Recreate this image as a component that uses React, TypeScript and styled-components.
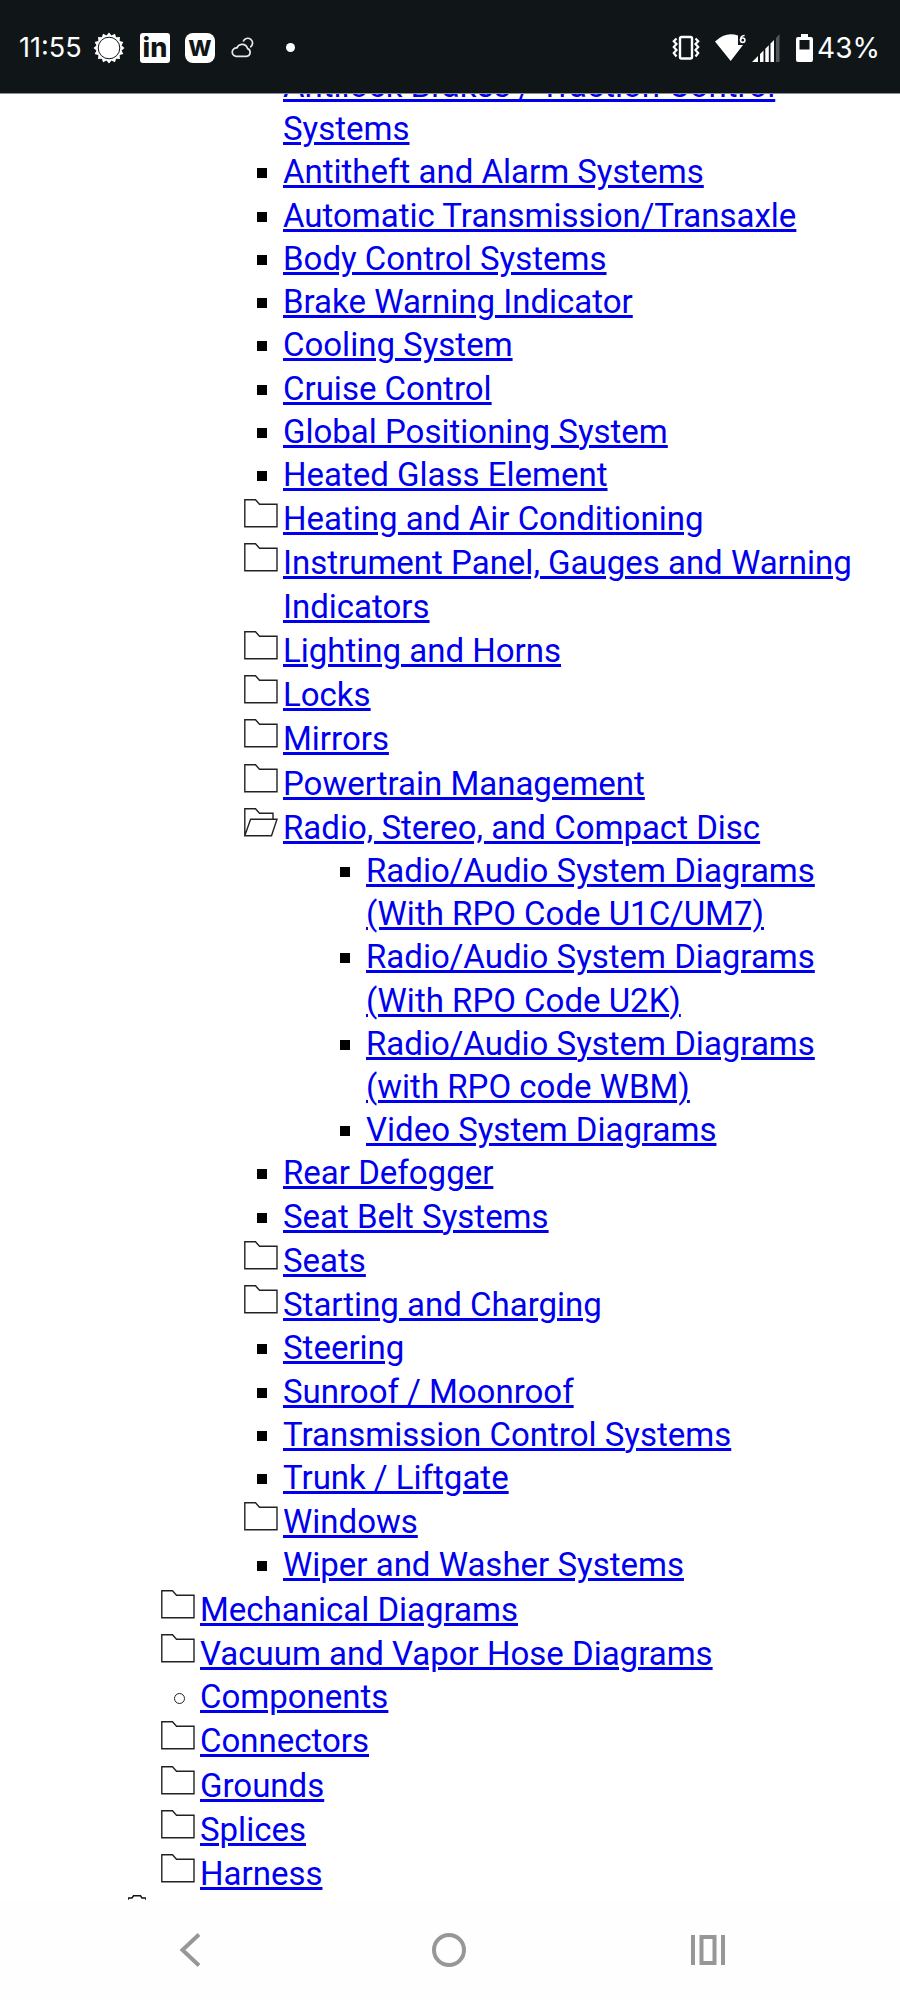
import React from "react";
import styled, { createGlobalStyle } from "styled-components";

const GlobalStyle = createGlobalStyle`
  *, *::before, *::after { box-sizing: border-box; }
  body {
    margin: 0;
    background: #ffffff;
    font-family: Roboto, "Liberation Sans", sans-serif;
  }
`;

const Screen = styled.div`
  display: flex;
  flex-direction: column;
  height: 100vh;
  overflow: hidden;
`;

const StatusBar = styled.header`
  display: flex;
  flex: none;
  align-items: center;
  justify-content: space-between;
  height: 94px;
  padding: 2px 20px 0 19px;
  border-bottom: 1px solid #8d9092;
  background: #101518;
  color: #ffffff;
  font-family: Inter, "Liberation Sans", sans-serif;
  font-size: 28px;
  line-height: 32px;
`;

const StatusGroup = styled.div<{ $gap: number }>`
  display: flex;
  align-items: center;
  gap: ${({ $gap }) => $gap}px;
`;

const Clock = styled.time`
  width: 59px;
  font-size: 27px;
  white-space: nowrap;
`;

const AppBadge = styled.span<{ $radius: number; $size: number }>`
  display: flex;
  align-items: center;
  justify-content: center;
  width: 30px;
  height: 30px;
  border-radius: ${({ $radius }) => $radius}px;
  background: #ffffff;
  color: #101518;
  font-size: ${({ $size }) => $size}px;
  font-weight: 800;
  line-height: 30px;
`;

const Dot = styled.span`
  width: 9px;
  height: 9px;
  margin-left: 16px;
  border-radius: 50%;
  background: #ffffff;
`;

const Battery = styled.span`
  display: flex;
  align-items: center;
  gap: 4px;
  margin-left: 11px;
`;

const Viewport = styled.main`
  flex: 1;
  min-height: 0;
  overflow: hidden;
`;

const Tree = styled.ul`
  margin: -30px 0 0;
  padding: 0 17px 0 77px;
  list-style: none;
  font-size: 33px;
  line-height: 1.31;
`;

const Branch = styled.ul`
  margin: 0;
  padding: 0 0 0 83px;
  list-style: none;
`;

const Row = styled.div<{ $folder: boolean }>`
  display: flex;
  align-items: flex-start;
  padding-top: ${({ $folder }) => ($folder ? 1 : 0)}px;
`;

const MarkerSlot = styled.span<{ $top: number; $left: number }>`
  display: flex;
  flex: none;
  width: 40px;
  padding: ${({ $top, $left }) => `${$top}px 0 0 ${$left}px`};
`;

const Square = styled.span`
  width: 10px;
  height: 10px;
  background: #000000;
`;

const Ring = styled.span`
  width: 11px;
  height: 11px;
  border: 1px solid #222222;
  border-radius: 50%;
`;

const TreeLink = styled.a`
  color: #0000ee;
  text-decoration: underline;
  text-decoration-thickness: 3px;
`;

const NextSection = styled.li`
  display: flex;
  padding-left: 51px;
`;

const NavBar = styled.nav`
  display: flex;
  flex: none;
  height: 100px;
  padding: 0 63px 0 61px;
  background: #fefefe;
`;

const NavButton = styled.button`
  display: flex;
  flex: 1;
  align-items: center;
  justify-content: center;
  padding: 0;
  border: 0;
  background: none;
  color: #979797;
`;

type Kind = "square" | "ring" | "folder" | "open";
type Node = { label: string; kind: Kind; children?: Node[] };

const square = (label: string): Node => ({ label, kind: "square" });
const folder = (label: string): Node => ({ label, kind: "folder" });

const systems: Node[] = [
  square("Antilock Brakes / Traction Control Systems"),
  square("Antitheft and Alarm Systems"),
  square("Automatic Transmission/Transaxle"),
  square("Body Control Systems"),
  square("Brake Warning Indicator"),
  square("Cooling System"),
  square("Cruise Control"),
  square("Global Positioning System"),
  square("Heated Glass Element"),
  folder("Heating and Air Conditioning"),
  folder("Instrument Panel, Gauges and Warning Indicators"),
  folder("Lighting and Horns"),
  folder("Locks"),
  folder("Mirrors"),
  folder("Powertrain Management"),
  {
    label: "Radio, Stereo, and Compact Disc",
    kind: "open",
    children: [
      square("Radio/Audio System Diagrams (With RPO Code U1C/UM7)"),
      square("Radio/Audio System Diagrams (With RPO Code U2K)"),
      square("Radio/Audio System Diagrams (with RPO code WBM)"),
      square("Video System Diagrams"),
    ],
  },
  square("Rear Defogger"),
  square("Seat Belt Systems"),
  folder("Seats"),
  folder("Starting and Charging"),
  square("Steering"),
  square("Sunroof / Moonroof"),
  square("Transmission Control Systems"),
  square("Trunk / Liftgate"),
  folder("Windows"),
  square("Wiper and Washer Systems"),
];

const diagrams: Node[] = [
  folder("Mechanical Diagrams"),
  folder("Vacuum and Vapor Hose Diagrams"),
  { label: "Components", kind: "ring" },
  folder("Connectors"),
  folder("Grounds"),
  folder("Splices"),
  folder("Harness"),
];

const FolderIcon = () => (
  <svg width="34" height="29" viewBox="0 0 34 29" fill="none" stroke="#222" strokeWidth="1.4" aria-hidden="true">
    <path d="M.8.8H11.5L15.5 5.2H33V27.8H.8Z" />
  </svg>
);

const OpenFolderIcon = () => (
  <svg width="34" height="29" viewBox="0 0 34 29" fill="none" stroke="#222" strokeWidth="1.4" aria-hidden="true">
    <path d="M.8 27.8V.8H11.5L15.5 5.2H29V11.2M.8 27.8 6.6 11.2H33L27.5 27.8Z" />
  </svg>
);

const CaseIcon = () => (
  <svg width="18" height="20" viewBox="0 0 18 20" fill="none" stroke="#111" strokeWidth="1.4" aria-hidden="true">
    <path d="M0 3H4L5.5.8H12.5L14 3H18V19H0Z" />
  </svg>
);

function Marker({ kind }: { kind: Kind }) {
  if (kind === "square") return <MarkerSlot $top={18} $left={14}><Square /></MarkerSlot>;
  if (kind === "ring") return <MarkerSlot $top={18} $left={14}><Ring /></MarkerSlot>;
  return (
    <MarkerSlot $top={2} $left={1}>
      {kind === "open" ? <OpenFolderIcon /> : <FolderIcon />}
    </MarkerSlot>
  );
}

function TreeNode({ node }: { node: Node }) {
  return (
    <li>
      <Row $folder={node.kind === "folder" || node.kind === "open"}>
        <Marker kind={node.kind} />
        <TreeLink href="#">{node.label}</TreeLink>
      </Row>
      {node.children && (
        <Branch>
          {node.children.map((child) => (
            <TreeNode key={child.label} node={child} />
          ))}
        </Branch>
      )}
    </li>
  );
}

const rays = Array.from({ length: 16 }, (_, i) => {
  const point = (r: number, turn: number) =>
    `${16 + r * Math.sin(turn * Math.PI * 2)},${16 - r * Math.cos(turn * Math.PI * 2)}`;
  return `${point(15.5, i / 16)} ${point(12.8, (i + 0.5) / 16)}`;
}).join(" ");

const SunIcon = () => (
  <svg width="32" height="32" viewBox="0 0 32 32" aria-hidden="true">
    <polygon points={rays} fill="#fff" />
    <circle cx="16" cy="16" r="10.8" fill="#fff" stroke="#101518" strokeWidth="1" />
  </svg>
);

const CloudIcon = () => (
  <svg width="24" height="22" viewBox="0 0 24 22" fill="none" stroke="#e8e8e8" strokeWidth="1.7" aria-hidden="true">
    <path d="M6 19.3H16.5A4 4 0 0 0 17.6 11.6C16.7 8.7 14.2 7.2 11.7 7.4 9.4 7.6 7.7 8.9 6.9 10.9A4.2 4.2 0 0 0 6 19.3Z" />
    <path d="M13.2 4.6A4.8 4.8 0 1 1 20.2 10.2" />
  </svg>
);

const VibrateIcon = () => (
  <svg width="28" height="26" viewBox="0 0 28 26" fill="none" stroke="#fff" aria-hidden="true">
    <rect x="8" y="2" width="12" height="21.5" rx="1.5" strokeWidth="2.4" />
    <path d="M4.5 3.5 1.8 6.3 4.5 9 1.8 12 4.5 15 1.8 18 4.5 21.5M23.5 3.5 26.2 6.3 23.5 9 26.2 12 23.5 15 26.2 18 23.5 21.5" strokeWidth="2.2" />
  </svg>
);

const WifiIcon = () => (
  <svg width="32" height="28" viewBox="0 0 32 28" aria-hidden="true">
    <path d="M0 7.5Q11-3 23 1.5V11H28L15.7 27Z" fill="#fff" />
    <path d="M29.6 1.5C26.8 1.3 25.5 3.5 25.5 6" fill="none" stroke="#fff" strokeWidth="1.6" />
    <circle cx="27.7" cy="6.2" r="2.2" fill="none" stroke="#fff" strokeWidth="1.6" />
  </svg>
);

const SignalIcon = () => (
  <svg width="28" height="28" viewBox="0 0 28 28" fill="#fff" aria-hidden="true">
    <path d="M0 28 6 22V28ZM8 20 11.5 16.5V28H8ZM13.3 14.7 16.8 11.2V28H13.3ZM18.5 9.5 22 6V28H18.5Z" />
    <path d="M24 4 27.5 0V28H24Z" fill="#54585b" />
  </svg>
);

const BatteryIcon = () => (
  <svg width="17" height="28" viewBox="0 0 17 28" aria-hidden="true">
    <path d="M5 0H12V3H15Q17 3 17 5V26Q17 28 15 28H2Q0 28 0 26V5Q0 3 2 3H5Z" fill="#fff" />
    <path d="M3.5 6H13.5V15.5H3.5Z" fill="#101518" />
  </svg>
);

export default function App() {
  return (
    <>
      <GlobalStyle />
      <Screen>
        <StatusBar>
          <StatusGroup $gap={15}>
            <Clock>11:55</Clock>
            <SunIcon />
            <AppBadge $radius={3} $size={27}>in</AppBadge>
            <AppBadge $radius={8} $size={22}>W</AppBadge>
            <StatusGroup $gap={16}>
              <CloudIcon />
              <Dot />
            </StatusGroup>
          </StatusGroup>
          <StatusGroup $gap={5}>
            <StatusGroup $gap={15}>
              <VibrateIcon />
              <WifiIcon />
            </StatusGroup>
            <SignalIcon />
            <Battery>
              <BatteryIcon />
              <span>43%</span>
            </Battery>
          </StatusGroup>
        </StatusBar>
        <Viewport>
          <Tree>
            <li>
              <Branch>
                <li>
                  <Branch>
                    {systems.map((node) => (
                      <TreeNode key={node.label} node={node} />
                    ))}
                  </Branch>
                </li>
                {diagrams.map((node) => (
                  <TreeNode key={node.label} node={node} />
                ))}
              </Branch>
            </li>
            <NextSection>
              <CaseIcon />
            </NextSection>
          </Tree>
        </Viewport>
        <NavBar aria-label="System navigation">
          <NavButton type="button" aria-label="Back">
            <svg width="22" height="34" viewBox="0 0 22 34" fill="none" stroke="currentColor" strokeWidth="4">
              <path d="M20 1.5 3.5 17 20 32.5" />
            </svg>
          </NavButton>
          <NavButton type="button" aria-label="Home">
            <svg width="34" height="34" viewBox="0 0 34 34" fill="none" stroke="currentColor" strokeWidth="4">
              <circle cx="17" cy="17" r="15" />
            </svg>
          </NavButton>
          <NavButton type="button" aria-label="Recent apps">
            <svg width="34" height="30" viewBox="0 0 34 30" fill="none" stroke="currentColor" strokeWidth="4">
              <path d="M2 0V30M32 0V30M10.5 2H23.5V28H10.5Z" />
            </svg>
          </NavButton>
        </NavBar>
      </Screen>
    </>
  );
}
